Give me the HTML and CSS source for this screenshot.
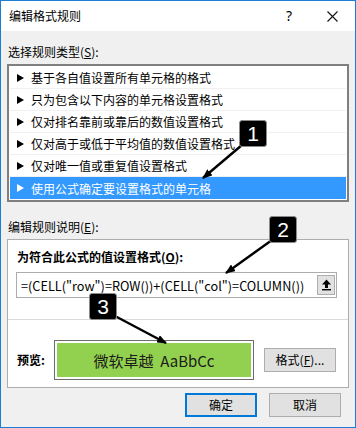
FILE: index.html
```html
<!DOCTYPE html>
<html lang="zh-CN">
<head>
<meta charset="utf-8">
<title>编辑格式规则</title>
<link rel="stylesheet" href="styles.css">
</head>
<body>
<div class="win">
  <div class="titlebar">
    <span class="title">编辑格式规则</span>
    <span class="help">?</span>
    <span class="close"><svg width="11" height="11" viewBox="0 0 11 11"><path d="M0.5 0.5 L10.5 10.5 M10.5 0.5 L0.5 10.5" stroke="#111" stroke-width="1.1" fill="none"/></svg></span>
  </div>
  <div class="content">
    <div class="label">选择规则类型(<u>S</u>):</div>
    <ul class="list">
      <li><span class="tri"></span>基于各自值设置所有单元格的格式</li>
      <li><span class="tri"></span>只为包含以下内容的单元格设置格式</li>
      <li><span class="tri"></span>仅对排名靠前或靠后的数值设置格式</li>
      <li><span class="tri"></span>仅对高于或低于平均值的数值设置格式</li>
      <li><span class="tri"></span>仅对唯一值或重复值设置格式</li>
      <li class="sel"><span class="tri"></span>使用公式确定要设置格式的单元格</li>
    </ul>
    <div class="label label2">编辑规则说明(<u>E</u>):</div>
    <div class="group">
      <div class="gtop">
        <div class="glabel">为符合此公式的值设置格式(<u>O</u>):</div>
        <div class="formula">
          <span class="ftext">=(CELL("row")=ROW())+(CELL("col")=COLUMN())</span>
          <span class="upbtn"><svg width="11" height="12" viewBox="0 0 11 12"><path d="M5.5 0.5 L10 5.5 L7 5.5 L7 9 L4 9 L4 5.5 L1 5.5 Z" fill="#000"/><rect x="1" y="10" width="9" height="1.4" fill="#000"/></svg></span>
        </div>
      </div>
      <div class="sep"></div>
      <div class="gbottom">
        <span class="plabel">预览:</span>
        <div class="preview"><div class="pfill">微软卓越&nbsp;&nbsp;AaBbCc</div></div>
        <span class="btn fmt">格式(<u>F</u>)...</span>
      </div>
    </div>
    <div class="footer">
      <span class="btn ok">确定</span>
      <span class="btn">取消</span>
    </div>
  </div>

  <svg class="annot" width="356" height="428" viewBox="0 0 356 428">
    <defs>
      <marker id="ah" markerWidth="10" markerHeight="8" refX="9" refY="4" orient="auto" markerUnits="userSpaceOnUse">
        <path d="M0 0 L10 4 L0 8 Z" fill="#000"/>
      </marker>
    </defs>
    <line x1="242" y1="145" x2="203" y2="178" stroke="#000" stroke-width="2.4" marker-end="url(#ah)"/>
    <line x1="272" y1="240" x2="226" y2="273" stroke="#000" stroke-width="2.4" marker-end="url(#ah)"/>
    <line x1="115" y1="316" x2="166" y2="343" stroke="#000" stroke-width="2.4" marker-end="url(#ah)"/>
  </svg>
  <div class="badge b1">1</div>
  <div class="badge b2">2</div>
  <div class="badge b3">3</div>
</div>
</body>
</html>
```

FILE: styles.css
```css
* { box-sizing: border-box; }
html, body { margin: 0; padding: 0; background: #f0f0f0; }
body {
  font-family: "Noto Sans CJK SC", "Noto Sans", sans-serif;
  font-size: 12px;
  color: #000;
}
u { text-decoration: underline; text-underline-offset: 1px; }

.win {
  position: relative;
  width: 356px;
  height: 428px;
  border: 1px solid #1a7fd4;
  background: #f0f0f0;
  overflow: hidden;
}

.titlebar {
  height: 30px;
  background: #fff;
  display: flex;
  align-items: center;
  padding-left: 8px;
}
.title { flex: 1; font-size: 12px; line-height: 16px; }
.help { width: 18px; text-align: center; font-size: 14px; line-height: 16px; margin-right: 29px; font-family: "Noto Sans", sans-serif; }
.close { width: 11px; height: 11px; margin-right: 17px; display: flex; }

.content { padding: 13px 6px 0 6px; }

.label { line-height: 16px; padding-left: 1px; }
.label2 { margin-top: 17px; }

.list {
  list-style: none;
  margin: 4px 0 0 0;
  padding: 1px;
  border: 2px solid #7f7f7f;
  background: #fff;
}
.list li {
  height: 22px;
  line-height: 21px;
  border-bottom: 1px solid #f0f0f0;
  padding-left: 7px;
  white-space: nowrap;
  display: flex;
  align-items: center;
}
.list li.sel {
  background: #3399ff;
  color: #fff;
  border-bottom: none;
}
.tri {
  width: 0;
  height: 0;
  border-top: 4px solid transparent;
  border-bottom: 4px solid transparent;
  border-left: 7px solid currentColor;
  margin-right: 7px;
}

.group {
  margin-top: 4px;
  border: 1px solid #adadad;
  background: #fff;
  height: 149px;
}
.gtop { padding: 9px 11px 0 8px; }
.glabel { font-weight: bold; line-height: 16px; padding-left: 1px; }
.formula {
  margin-top: 7px;
  height: 26px;
  border: 1px solid #acacac;
  display: flex;
  align-items: center;
  padding-left: 4px;
  padding-right: 1px;
}
.ftext { flex: 1; font-size: 12.7px; white-space: nowrap; }
.upbtn {
  width: 18px;
  height: 20px;
  background: #e1e1e1;
  border: 1px solid #adadad;
  display: flex;
  align-items: center;
  justify-content: center;
}
.sep { height: 1px; background: #dadada; margin-top: 21px; }

.gbottom {
  display: flex;
  align-items: center;
  padding: 20px 11px 0 9px;
}
.plabel { font-weight: bold; width: 37px; line-height: 16px; }
.preview {
  width: 200px;
  height: 40px;
  border: 1px solid #6d6d6d;
  padding: 2px;
  background: #fff;
}
.pfill {
  height: 100%;
  background: #92d050;
  display: flex;
  align-items: center;
  justify-content: center;
  font-size: 15px;
  color: #1b1b1b;
}

.btn {
  display: flex;
  align-items: center;
  justify-content: center;
  width: 72px;
  height: 24px;
  background: #e1e1e1;
  border: 1px solid #adadad;
  font-size: 12px;
  line-height: 16px;
}
.fmt { margin-left: 10px; }

.footer {
  display: flex;
  justify-content: flex-end;
  gap: 12px;
  margin-top: 5px;
  padding-right: 8px;
}
.ok { border: 2px solid #0078d7; }

.annot { position: absolute; left: -1px; top: -1px; pointer-events: none; }

.badge {
  position: absolute;
  width: 28px;
  height: 27px;
  background: #000;
  border: 1px solid #8a8a8a;
  border-radius: 3px;
  color: #fff;
  font-family: "Liberation Sans", Arial, sans-serif;
  font-size: 21px;
  line-height: 25px;
  text-align: center;
}
.b1 { left: 238px; top: 119px; }
.b2 { left: 268px; top: 215px; }
.b3 { left: 88px; top: 292px; }
```
